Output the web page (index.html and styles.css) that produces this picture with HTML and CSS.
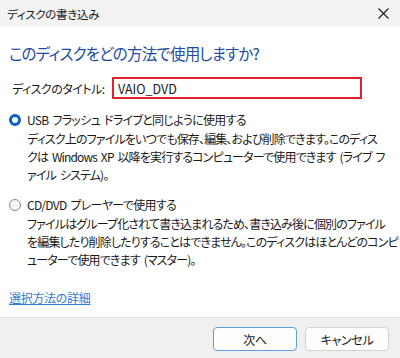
FILE: index.html
```html
<!DOCTYPE html>
<html lang="ja">
<head>
  <meta charset="utf-8">
  <title>ディスクの書き込み</title>
  <link rel="stylesheet" href="styles.css">
</head>
<body>
<div class="dialog">
  <div class="titlebar">
    <span class="title">ディスクの書き込み</span>
    <button class="close" aria-label="閉じる">
      <svg width="11" height="11" viewBox="0 0 11 11"><path d="M0.5 0.5 L10.5 10.5 M10.5 0.5 L0.5 10.5" stroke="#1a1a1a" stroke-width="1.1" fill="none"/></svg>
    </button>
  </div>

  <div class="content">
    <h1 class="instruction">このディスクをどの方法で使用しますか?</h1>

    <div class="name-row">
      <label for="disc-title">ディスクのタイトル:</label>
      <input id="disc-title" class="name-input" type="text" value="VAIO_DVD">
    </div>

    <div class="option">
      <span class="radio checked"></span>
      <div class="option-text">
        <div class="option-title">USB フラッシュ ドライブと同じように使用する</div>
        <div class="option-desc">ディスク上のファイルをいつでも保存、編集、および削除できます。このディス<br>クは Windows XP 以降を実行するコンピューターで使用できます (ライブ フ<br>ァイル システム)。</div>
      </div>
    </div>

    <div class="option">
      <span class="radio"></span>
      <div class="option-text">
        <div class="option-title">CD/DVD プレーヤーで使用する</div>
        <div class="option-desc">ファイルはグループ化されて書き込まれるため、書き込み後に個別のファイル<br>を編集したり削除したりすることはできません。このディスクはほとんどのコンピ<br>ューターで使用できます (マスター)。</div>
      </div>
    </div>

    <a class="more-link" href="#">選択方法の詳細</a>
  </div>

  <div class="footer">
    <button class="btn default">次へ</button>
    <button class="btn">キャンセル</button>
  </div>
</div>
</body>
</html>
```

FILE: styles.css
```css
* {
  box-sizing: border-box;
}

body {
  margin: 0;
  font-family: "Noto Sans CJK JP", "Noto Sans", sans-serif;
  font-feature-settings: "palt";
  color: #1a1a1a;
  background: #ffffff;
}

.dialog {
  width: 400px;
  height: 358px;
  display: flex;
  flex-direction: column;
  overflow: hidden;
}

.titlebar {
  height: 27px;
  flex-shrink: 0;
  background: #f3f3f3;
  display: flex;
  align-items: center;
  justify-content: space-between;
  padding: 0 11px 0 7px;
}

.title {
  font-size: 11.5px;
  letter-spacing: -0.3px;
}

.close {
  border: none;
  background: none;
  padding: 0;
  display: flex;
}

.content {
  flex: 1;
  padding: 15px 10px 0 9px;
}

.instruction {
  margin: 0;
  font-size: 15.5px;
  letter-spacing: -0.8px;
  font-weight: normal;
  line-height: 22px;
  color: #1e4aa8;
}

.name-row {
  display: flex;
  align-items: center;
  margin-top: 13px;
  padding-left: 3px;
  font-size: 12px;
  letter-spacing: -0.5px;
}

.name-row label {
  width: 100px;
  flex-shrink: 0;
}

.name-input {
  width: 250px;
  height: 22px;
  border: 2.5px solid #e0202a;
  padding: 0 4px;
  font-family: inherit;
  font-size: 12.5px;
  color: #1a1a1a;
  outline: none;
}

.option {
  display: flex;
  align-items: flex-start;
  font-size: 12px;
  letter-spacing: -0.7px;
  word-spacing: 2px;
  line-height: 18px;
  margin-top: 12px;
}

.radio {
  width: 12px;
  height: 12px;
  margin: 3px 6px 0 0;
  border-radius: 50%;
  border: 1px solid #8a8a8a;
  background: #f6f6f6;
  flex-shrink: 0;
}

.radio.checked {
  border: 3.5px solid #0a5fc4;
  background: #ffffff;
}

.option-desc {
  margin-top: 1px;
  letter-spacing: -0.85px;
  white-space: nowrap;
}

.more-link {
  display: inline-block;
  margin-top: 20px;
  font-size: 12px;
  letter-spacing: -0.3px;
  color: #2f7ad6;
  text-decoration: underline;
}

.footer {
  height: 41px;
  flex-shrink: 0;
  background: #f0f0f0;
  border-top: 1px solid #e3e3e3;
  display: flex;
  justify-content: flex-end;
  gap: 8px;
  padding: 9px 11px 0 0;
}

.btn {
  width: 84px;
  height: 24px;
  background: #fdfdfd;
  border: 1px solid #d3d3d3;
  border-radius: 4px;
  font-family: inherit;
  font-feature-settings: "palt";
  font-size: 12px;
  letter-spacing: -0.3px;
  color: #1a1a1a;
}

.btn.default {
  border-color: #5f9fe0;
}
```
